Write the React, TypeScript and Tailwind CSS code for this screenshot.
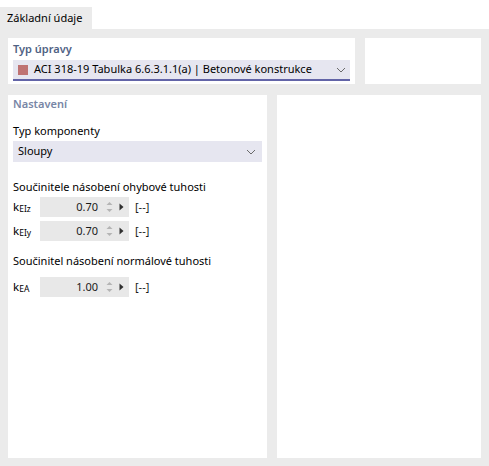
const font = { fontFamily: '"Noto Sans", "Open Sans", sans-serif' }

function Chevron() {
  return (
    <svg width="10" height="6" viewBox="0 0 10 6" className="shrink-0">
      <path d="M1 1 L5 5 L9 1" fill="none" stroke="#6a6a6a" strokeWidth="1" />
    </svg>
  )
}

function Spinner() {
  return (
    <svg width="7" height="12" viewBox="0 0 7 12" className="shrink-0">
      <path d="M0.5 4 L3.5 1 L6.5 4 Z" fill="#b4b4b4" />
      <path d="M0.5 8 L3.5 11 L6.5 8 Z" fill="#b4b4b4" />
    </svg>
  )
}

function NumberRow({ sub, value }: { sub: string; value: string }) {
  return (
    <div className="flex h-[20px] items-center">
      <div className="w-[27px] flex items-baseline text-[11.5px] text-black">
        <span>k</span>
        <span className="text-[8.5px] leading-none translate-y-[1px]">{sub}</span>
      </div>
      <div className="w-[89px] h-[20px] bg-[#e8e8e8] flex items-center">
        <span className="flex-1 text-right text-[11px] pr-[8px]">{value}</span>
        <Spinner />
        <svg width="5" height="8" viewBox="0 0 5 8" className="ml-[6px] mr-[5px]">
          <path d="M0.5 0.5 L4.5 4 L0.5 7.5 Z" fill="#303030" />
        </svg>
      </div>
      <span className="ml-[6px] text-[11px]">[--]</span>
    </div>
  )
}

export default function App() {
  return (
    <div className="w-[489px] h-[466px] bg-white flex flex-col text-[#1a1a1a]" style={font}>
      {/* tab strip */}
      <div className="h-[29px] pt-[7px] flex">
        <div className="w-[92px] h-[22px] bg-[#ebebeb] flex items-center pl-[7px] text-[11px] text-black whitespace-nowrap">
          Základní údaje
        </div>
      </div>

      <div className="flex-1 bg-[#ebebeb] px-[8px] pt-[9px] pb-[8px] flex flex-col gap-[11px]">
        {/* Typ úpravy */}
        <div className="h-[46px] flex gap-[10px]">
          <div className="w-[347px] bg-white px-[5px] pt-[1px]">
            <div className="h-[21px] flex items-center text-[11px] font-semibold text-[#4f6284]">Typ úpravy</div>
            <div className="h-[21px] bg-[#e6e6f0] border-b-2 border-[#6264a7] flex items-center pl-[5px] pr-[4px]">
              <span className="w-[10px] h-[10px] bg-[#bf7373] shrink-0" />
              <span className="ml-[6px] flex-1 text-[11px] text-black whitespace-nowrap">
                ACI 318-19 Tabulka 6.6.3.1.1(a) | Betonové konstrukce
              </span>
              <Chevron />
            </div>
          </div>
          <div className="flex-1 bg-white" />
        </div>

        {/* Nastavení */}
        <div className="flex-1 flex gap-[10px]">
          <div className="w-[259px] bg-white px-[5px] pt-[1px] flex flex-col">
            <div className="h-[16px] flex items-center text-[11px] font-semibold text-[#7886a6]">Nastavení</div>
            <div className="mt-[11px] h-[16px] flex items-center text-[11px] text-black">Typ komponenty</div>
            <div className="mt-[2px] h-[21px] bg-[#e6e6f0] flex items-center pl-[5px] pr-[6px]">
              <span className="flex-1 text-[11px] text-black">Sloupy</span>
              <Chevron />
            </div>

            <div className="mt-[17px] h-[16px] flex items-center text-[11px] text-black whitespace-nowrap">
              Součinitele násobení ohybové tuhosti
            </div>
            <div className="mt-[2px] flex flex-col gap-[4px]">
              <NumberRow sub="EIz" value="0.70" />
              <NumberRow sub="EIy" value="0.70" />
            </div>

            <div className="mt-[12px] h-[16px] flex items-center text-[11px] text-black whitespace-nowrap">
              Součinitel násobení normálové tuhosti
            </div>
            <div className="mt-[8px]">
              <NumberRow sub="EA" value="1.00" />
            </div>
          </div>
          <div className="flex-1 bg-white" />
        </div>
      </div>
    </div>
  )
}
